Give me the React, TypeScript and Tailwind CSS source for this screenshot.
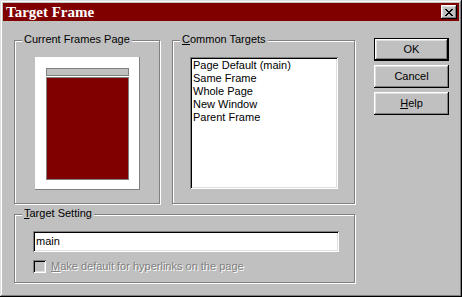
const bevel =
    "shadow-[inset_-1px_-1px_0_#000,inset_1px_1px_0_#fff,inset_-2px_-2px_0_#808080,inset_2px_2px_0_#dfdfdf]";
const sunken =
    "shadow-[inset_1px_1px_0_#808080,inset_-1px_-1px_0_#fff,inset_2px_2px_0_#000,inset_-2px_-2px_0_#dfdfdf]";

const Group = ({
    label,
    className,
    children,
}: {
    label: React.ReactNode;
    className: string;
    children: React.ReactNode;
}) => (
    <div
        className={`relative border border-[#808080] shadow-[inset_1px_1px_0_#fff,1px_1px_0_#fff] ${className}`}
    >
        <span className="absolute -top-[8px] left-[7px] bg-[#c0c0c0] px-[2px] leading-[13px]">
            {label}
        </span>
        {children}
    </div>
);

const Button = ({
    children,
    isDefault,
}: {
    children: React.ReactNode;
    isDefault?: boolean;
}) => (
    <button
        className={`h-[23px] w-[75px] bg-[#c0c0c0] ${
            isDefault ? "border border-black" : ""
        }`}
    >
        <div className={`flex h-full w-full items-center justify-center ${bevel}`}>
            {children}
        </div>
    </button>
);

const targets = [
    "Page Default (main)",
    "Same Frame",
    "Whole Page",
    "New Window",
    "Parent Frame",
];

export default function App() {
    return (
        <div
            className="flex h-[297px] w-[462px] flex-col bg-[#c0c0c0] p-[3px] text-[11px] text-black shadow-[inset_-1px_-1px_0_#000,inset_1px_1px_0_#dfdfdf,inset_-2px_-2px_0_#808080,inset_2px_2px_0_#fff]"
            style={{ fontFamily: '"Liberation Sans", Arial, sans-serif' }}
        >
            <div className="flex h-[18px] items-center justify-between bg-[#800000] pl-[3px] pr-[2px]">
                <span
                    className="text-[15px] font-bold leading-none text-white"
                    style={{ fontFamily: '"Liberation Serif", "Times New Roman", serif' }}
                >
                    Target Frame
                </span>
                <div className={`flex h-[14px] w-[16px] items-center justify-center bg-[#c0c0c0] ${bevel}`}>
                    <svg width="8" height="7" viewBox="0 0 8 7" shapeRendering="crispEdges">
                        <path
                            d="M0 0h2v1H0zM6 0h2v1H6zM1 1h2v1H1zM5 1h2v1H5zM2 2h4v1H2zM3 3h2v1H3zM2 4h4v1H2zM1 5h2v1H1zM5 5h2v1H5zM0 6h2v1H0zM6 6h2v1H6z"
                            fill="#000"
                        />
                    </svg>
                </div>
            </div>

            <div className="flex pl-[11px] pt-[19px]">
                <div className="flex w-[341px] flex-col">
                    <div className="flex gap-[12px]">
                        <Group label="Current Frames Page" className="h-[164px] w-[146px] pl-[20px] pt-[16px]">
                            <div className="h-[133px] w-[105px] border-b border-r border-[#808080] bg-white pl-[11px] pt-[11px]">
                                <div className="h-[8px] w-[83px] border border-[#808080] bg-[#c0c0c0]" />
                                <div className="mt-[1px] h-[103px] w-[83px] border border-[#808080] bg-[#800000]" />
                            </div>
                        </Group>
                        <Group
                            label={
                                <>
                                    <u>C</u>ommon Targets
                                </>
                            }
                            className="h-[164px] w-[183px] pl-[17px] pt-[16px]"
                        >
                            <div className={`h-[132px] w-[148px] bg-white px-[3px] pt-[2px] ${sunken}`}>
                                {targets.map((t) => (
                                    <div key={t} className="leading-[13px]">
                                        {t}
                                    </div>
                                ))}
                            </div>
                        </Group>
                    </div>

                    <Group
                        label={
                            <>
                                <u>T</u>arget Setting
                            </>
                        }
                        className="mt-[10px] h-[69px] w-[341px] pl-[18px] pt-[16px]"
                    >
                        <div className={`flex h-[21px] w-[306px] items-center bg-white px-[3px] ${sunken}`}>
                            main
                        </div>
                        <div className="mt-[6px] flex items-center gap-[5px]">
                            <div className={`h-[13px] w-[13px] bg-[#c0c0c0] ${sunken}`} />
                            <span className="text-[#808080] [text-shadow:1px_1px_0_#fff]">
                                <u>M</u>ake default for hyperlinks on the page
                            </span>
                        </div>
                    </Group>
                </div>

                <div className="-mt-[2px] ml-[19px] flex flex-col gap-[4px]">
                    <Button isDefault>OK</Button>
                    <Button>Cancel</Button>
                    <Button>
                        <span>
                            <u>H</u>elp
                        </span>
                    </Button>
                </div>
            </div>
        </div>
    );
}
